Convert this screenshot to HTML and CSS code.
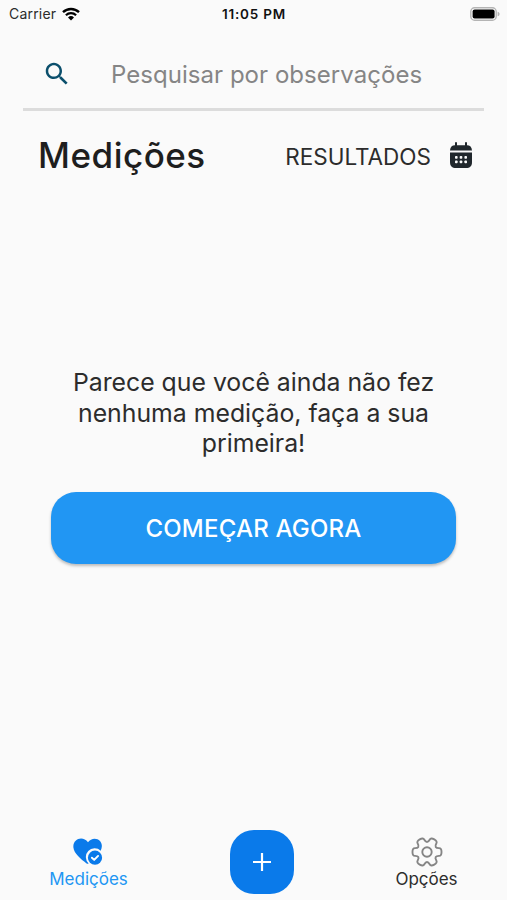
FILE: index.html
```
<!DOCTYPE html>
<html lang="pt-BR">
<head>
    <meta charset="UTF-8">
    <meta name="viewport" content="width=device-width, initial-scale=1.0">
    <title>Medições</title>
    <link rel="stylesheet" href="styles.css">
</head>
<body>
    <div class="status-bar">
        <div class="carrier">
            <span>Carrier</span>
            <svg width="18" height="14" viewBox="0 0 18 14">
                <path d="M1 5.2a11.5 11.5 0 0 1 16 0" fill="none" stroke="#000" stroke-width="2.4"/>
                <path d="M3.9 8.3a7.3 7.3 0 0 1 10.2 0" fill="none" stroke="#000" stroke-width="2.2"/>
                <path d="M9 13.6l-3-3.2a4.3 4.3 0 0 1 6 0z"/>
            </svg>
        </div>
        <span class="clock">11:05 PM</span>
        <svg class="battery" width="31" height="14" viewBox="0 0 31 14">
            <rect x=".8" y=".8" width="25.4" height="12.4" rx="3.8" fill="#fff" stroke="#b4b4b4" stroke-width="1.4"/>
            <rect x="2.6" y="2.4" width="22" height="9.2" rx="2"/>
            <path d="M27.6 4.7c2.6.7 2.6 3.9 0 4.6z" fill="#b4b4b4"/>
        </svg>
    </div>

    <div class="search">
        <svg width="30" height="30" viewBox="0 0 24 24" fill="#0b4f6c">
            <path d="M15.5 14h-.79l-.28-.27C15.41 12.59 16 11.11 16 9.5 16 5.91 13.09 3 9.5 3S3 5.91 3 9.5 5.91 16 9.5 16c1.61 0 3.09-.59 4.23-1.57l.27.28v.79l5 4.99L20.49 19l-4.99-5zm-6 0C7.01 14 5 11.99 5 9.5S7.01 5 9.5 5 14 7.01 14 9.5 11.99 14 9.5 14z"/>
        </svg>
        <span class="placeholder">Pesquisar por observações</span>
    </div>

    <div class="header">
        <h1>Medições</h1>
        <div class="results">
            <span>RESULTADOS</span>
            <svg width="24" height="26" viewBox="0 0 24 26" fill="#20272c">
                <path d="M1 8.6C1.2 5 3 3.3 6 3.3h12c3 0 4.8 1.7 5 5.3z"/>
                <path d="M1 10.5h22V20c0 4-2 6-6 6H7c-4 0-6-2-6-6z"/>
                <path d="M7 1v4M17 1v4" stroke="#20272c" stroke-width="2" stroke-linecap="round"/>
                <g fill="#fafafa">
                    <rect x="6" y="14" width="2.6" height="2.8" rx=".8"/>
                    <rect x="10.7" y="14" width="2.6" height="2.8" rx=".8"/>
                    <rect x="15.4" y="14" width="2.6" height="2.8" rx=".8"/>
                    <rect x="6" y="18.5" width="2.6" height="2.8" rx=".8"/>
                    <rect x="10.7" y="18.5" width="2.6" height="2.8" rx=".8"/>
                    <rect x="15.4" y="18.5" width="2.6" height="2.8" rx=".8"/>
                </g>
            </svg>
        </div>
    </div>

    <div class="empty">
        <p>Parece que você ainda não fez<br>nenhuma medição, faça a sua<br>primeira!</p>
        <button class="start">COMEÇAR AGORA</button>
    </div>

    <div class="tabs">
        <div class="tab active">
            <svg width="32" height="30" viewBox="0 0 32 30" fill="#0a7aea">
                <path d="M15 5.2C18 .8 24 .6 27 4c2.4 2.8 2.3 6.5.7 9.7a8.6 8.6 0 0 0-12.1 12.8c-.8.5-1.5.3-2.3-.3C8 22.2 1 16.5.4 10.5-.4 1.5 10-1.8 15 5.2z"/>
                <circle cx="22" cy="20.7" r="7.1"/>
                <path d="M18.9 20.7l2.3 2.2 3.9-4" fill="none" stroke="#fff" stroke-width="1.9" stroke-linecap="round" stroke-linejoin="round"/>
            </svg>
            <span>Medições</span>
        </div>
        <div class="add">
            <svg width="18" height="18" viewBox="0 0 18 18">
                <path d="M9 0v18M0 9h18" stroke="#fff" stroke-width="2.2"/>
            </svg>
        </div>
        <div class="tab">
            <svg width="32" height="30" viewBox="-16 -15 32 30" fill="none" stroke="#858585">
                <path transform="scale(.94)" stroke-width="2" d="M15.45 0Q15.45 4.14 12.73 4.1Q10.01 4.05 9.26 5.35Q8.51 6.65 9.91 8.98Q11.31 11.31 7.73 13.38Q4.14 15.45 2.82 13.07Q1.5 10.69 0 10.69Q-1.5 10.69-2.82 13.07Q-4.14 15.45-7.73 13.38Q-11.31 11.31-9.91 8.98Q-8.51 6.65-9.26 5.35Q-10.01 4.05-12.73 4.1Q-15.45 4.14-15.45 0Q-15.45-4.14-12.73-4.1Q-10.01-4.05-9.26-5.35Q-8.51-6.65-9.91-8.98Q-11.31-11.31-7.73-13.38Q-4.14-15.45-2.82-13.07Q-1.5-10.69 0-10.69Q1.5-10.69 2.82-13.07Q4.14-15.45 7.73-13.38Q11.31-11.31 9.91-8.98Q8.51-6.65 9.26-5.35Q10.01-4.05 12.73-4.1Q15.45-4.14 15.45 0z"/>
                <circle r="4.7" stroke-width="1.9"/>
            </svg>
            <span>Opções</span>
        </div>
    </div>
</body>
</html>
```
FILE: styles.css
```
* {
    box-sizing: border-box;
}
body {
    margin: 0;
    height: 900px;
    display: flex;
    flex-direction: column;
    font-family: Inter, sans-serif;
    background-color: #fafafa;
    color: #2c2c2c;
    overflow: hidden;
}
svg {
    display: block;
    flex: none;
}
.status-bar {
    height: 27px;
    padding: 0 6px 0 9px;
    display: grid;
    grid-template-columns: 1fr auto 1fr;
    align-items: center;
    font-size: 14px;
}
.carrier {
    display: flex;
    align-items: center;
    gap: 6px;
    letter-spacing: 0.2px;
}
.clock {
    color: #111;
    font-size: 13.5px;
    font-weight: 600;
    letter-spacing: 0.8px;
    margin-right: 2px;
}
.battery {
    justify-self: end;
}
.search {
    height: 84px;
    margin: 0 23px;
    padding: 13px 0 0 19px;
    display: flex;
    align-items: center;
    gap: 39px;
    border-bottom: 3px solid #dcdcdc;
}
.placeholder {
    font-size: 24px;
    letter-spacing: 0.04px;
    color: #858585;
}
.header {
    height: 88px;
    padding: 0 34px 0 38px;
    display: flex;
    align-items: center;
    justify-content: space-between;
}
.header h1 {
    margin: 0;
    font-size: 35px;
    font-weight: 500;
    letter-spacing: 0.5px;
    color: #1e1e1e;
}
.results {
    display: flex;
    align-items: center;
    gap: 18px;
    font-size: 22.5px;
}
.results span {
    padding-top: 3px;
}
.empty {
    flex: 1;
    padding-top: 168px;
    display: flex;
    flex-direction: column;
    align-items: center;
}
.empty p {
    margin: 0 0 33px;
    font-size: 24.8px;
    line-height: 30.5px;
    text-align: center;
}
.start {
    width: 405px;
    height: 72px;
    padding: 2px 0 0;
    border: none;
    border-radius: 25px;
    background: #2196f3;
    box-shadow: 0 2px 3px rgba(0, 0, 0, 0.25);
    color: #fff;
    font-family: inherit;
    font-size: 24px;
    font-weight: 500;
    letter-spacing: 0.2px;
}
.tabs {
    height: 70px;
    padding: 0 33px 0 41px;
    display: flex;
    justify-content: space-between;
}
.tab {
    width: 95px;
    padding-top: 7px;
    display: flex;
    flex-direction: column;
    align-items: center;
    gap: 2px;
    font-size: 17px;
    line-height: 21px;
}
.tab.active {
    color: #2196f3;
}
.add {
    width: 64px;
    height: 64px;
    margin-left: 9px;
    display: flex;
    align-items: center;
    justify-content: center;
    border-radius: 24px;
    background: #0a7aea;
}
```
